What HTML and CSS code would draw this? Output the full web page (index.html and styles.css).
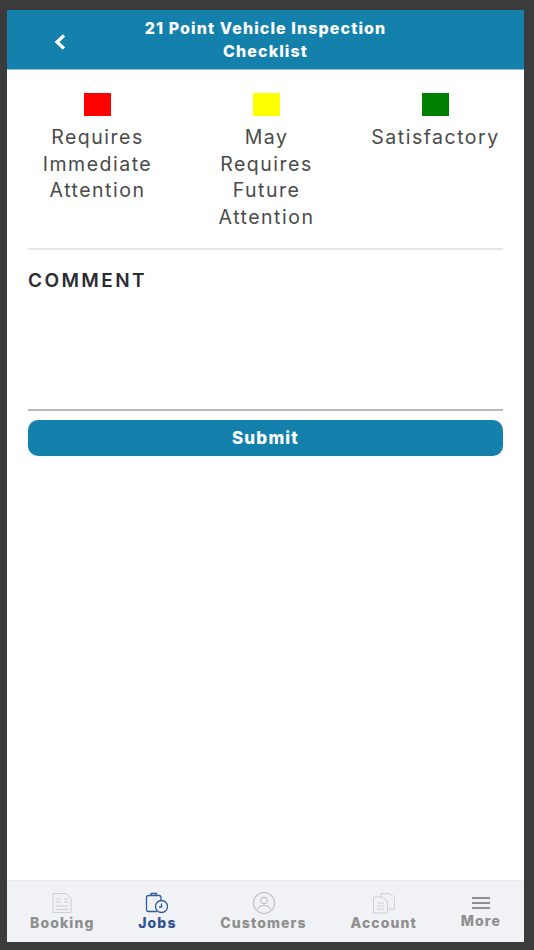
FILE: index.html
```html
<!DOCTYPE html>
<html>

<head>
    <meta http-equiv="Content-Type" content="text/html; charset=utf-8">
    <title>21 Point Vehicle Inspection Checklist</title>
    <link rel="stylesheet" href="styles.css">
</head>
<body>

<div class="phone">
    <header class="top_bar">
        <svg class="back_icon" width="14" height="18" viewBox="0 0 14 18">
            <path d="M11 2.500 L4 9 L11 15.500" fill="none" stroke="#fff" stroke-width="3.200"/>
        </svg>
        <h1>21 Point Vehicle Inspection<br>Checklist</h1>
    </header>

    <main class="content">
        <div class="legend">
            <div class="legend_item">
                <span class="swatch swatch_red"></span>
                <p>Requires Immediate Attention</p>
            </div>
            <div class="legend_item">
                <span class="swatch swatch_yellow"></span>
                <p>May Requires Future Attention</p>
            </div>
            <div class="legend_item">
                <span class="swatch swatch_green"></span>
                <p>Satisfactory</p>
            </div>
        </div>
        <div class="divider"></div>

        <h2>COMMENT</h2>
        <div class="comment_box"></div>
        <button type="button" class="submit_btn">Submit</button>
    </main>

    <nav class="tab_bar">
        <a class="tab">
            <svg width="22" height="22" viewBox="0 0 22 22" fill="none" stroke="#c9d2ce" stroke-width="1">
                <path d="M2 1.500 H15 L20 6 V20.500 H2 Z"/>
                <path d="M5 7 H10 M5 10 H10 M13 7 H17 M13 10 H17 M5 14 H17 M5 17.500 H17"/>
            </svg>
            <span>Booking</span>
        </a>
        <a class="tab tab_active">
            <svg width="26" height="22" viewBox="0 0 26 22" fill="none" stroke="#2f5d9b" stroke-width="1.300">
                <path d="M13 19.500 H4.500 Q2.500 19.500 2.500 17.500 V5.500 Q2.500 3.500 4.500 3.500 H15 Q17 3.500 17 5.500 V8"/>
                <path d="M7 3.500 V1.500 H12.500 V3.500"/>
                <circle cx="17.500" cy="14.500" r="6"/>
                <path d="M17.500 11.500 V15 H15"/>
            </svg>
            <span>Jobs</span>
        </a>
        <a class="tab">
            <svg width="26" height="22" viewBox="0 0 26 22" fill="none" stroke="#bcc5c4" stroke-width="1.200">
                <circle cx="13" cy="11" r="10.500"/>
                <circle cx="13" cy="8.500" r="3.200"/>
                <path d="M6.500 17.500 Q8 13.500 13 13.500 Q18 13.500 19.500 17.500"/>
            </svg>
            <span>Customers</span>
        </a>
        <a class="tab">
            <svg width="24" height="22" viewBox="0 0 24 22" fill="none" stroke="#c9d2d2" stroke-width="1">
                <path d="M1.500 5 H10 L15.500 9 V21 H1.500 Z"/>
                <path d="M9 5 V1.500 H17 L22.500 5 V17 H15.500"/>
                <path d="M5 11 H12 M5 14 H12 M5 17 H12"/>
            </svg>
            <span>Account</span>
        </a>
        <a class="tab tab_more">
            <svg width="20" height="14" viewBox="0 0 20 14" fill="none" stroke="#6f6f6f" stroke-width="1.600">
                <path d="M1 2 H19 M1 7 H19 M1 12 H19"/>
            </svg>
            <span>More</span>
        </a>
    </nav>
</div>

</body>
</html>
```

FILE: styles.css
```css
html, body {
    height: 100%;
}

body {
    margin: 0;
    padding: 10px 10px 8px 7px;
    box-sizing: border-box;
    background: #3b3b3b;
    font-family: Inter, "Open Sans", "Liberation Sans", sans-serif;
}

.phone {
    height: 100%;
    display: flex;
    flex-direction: column;
    background: #fff;
}

.top_bar {
    height: 60px;
    flex: none;
    position: relative;
    display: flex;
    align-items: center;
    justify-content: center;
    padding-top: 1px;
    background: #1481ad;
    border-bottom: 1px solid #8fc0d6;
    box-sizing: border-box;
}

.back_icon {
    position: absolute;
    left: 46px;
    top: 23px;
}

h1 {
    margin: 0;
    font-size: 16px;
    line-height: 23px;
    font-weight: 800;
    letter-spacing: 1.100px;
    color: #fff;
    text-align: center;
}

.content {
    flex: 1;
    padding: 23px 21px 0;
}

.legend {
    display: grid;
    grid-template-columns: repeat(3, 1fr);
    margin: 0 -17px 0 -15px;
    padding-bottom: 18px;
}

.legend_item {
    display: flex;
    flex-direction: column;
    align-items: center;
    text-align: center;
}

.legend_item p {
    margin: 8px 0 0;
    width: 130px;
    font-size: 19.500px;
    line-height: 26.500px;
    letter-spacing: 1.500px;
    color: #4a4a4a;
}

.swatch {
    width: 27px;
    height: 23px;
}

.swatch_red {
    background: #ff0000;
}

.swatch_yellow {
    background: #ffff00;
}

.swatch_green {
    background: #008000;
}

.divider {
    height: 2px;
    background: #e6e6e6;
}

h2 {
    margin: 20px 0 0;
    font-size: 19px;
    line-height: 22px;
    font-weight: 600;
    letter-spacing: 2.400px;
    color: #2b2b33;
}

.comment_box {
    height: 117px;
    border-bottom: 2px solid #b9b9b9;
}

.submit_btn {
    display: block;
    width: 100%;
    height: 36px;
    margin-top: 9px;
    border: none;
    border-radius: 10px;
    background: #1481ad;
    color: #fff;
    font-family: inherit;
    font-size: 17px;
    font-weight: 800;
    letter-spacing: 1.200px;
}

.tab_bar {
    height: 62px;
    flex: none;
    display: flex;
    justify-content: space-between;
    padding: 11px 23px 0;
    box-sizing: border-box;
    background: #f0f2f5;
    border-top: 1px solid #e9ebee;
}

.tab {
    display: flex;
    flex-direction: column;
    align-items: center;
    font-size: 14px;
    line-height: 18px;
    font-weight: 800;
    letter-spacing: 1.100px;
    color: #8f8f8f;
}

.tab_active {
    color: #2f5490;
}

.tab_more {
    padding-top: 4px;
    gap: 2px;
}
```
